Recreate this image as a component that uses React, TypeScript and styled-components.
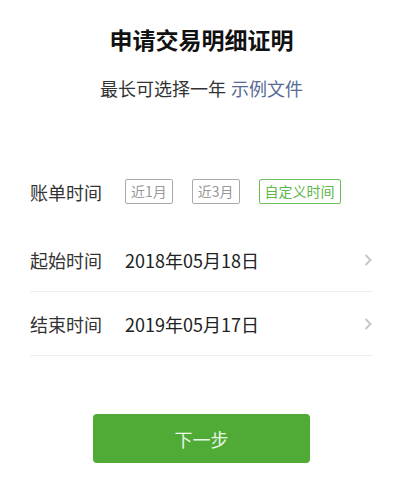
import React, { useState } from 'react';
import styled, { createGlobalStyle } from 'styled-components';

const GlobalStyle = createGlobalStyle`
  body {
    margin: 0;
    background: #fff;
    font-family: "Noto Sans CJK SC", "Liberation Sans", sans-serif;
    -webkit-font-smoothing: antialiased;
  }
`;

const Page = styled.div`
  display: flex;
  flex-direction: column;
  padding: 24px 33px 0 30px;
`;

const Header = styled.header`
  display: flex;
  flex-direction: column;
  align-items: center;
`;

const Title = styled.h1`
  margin: 0;
  font-size: 23px;
  line-height: 30px;
  font-weight: 700;
  color: #111;
`;

const Subtitle = styled.p`
  margin: 22px 0 0;
  font-size: 18px;
  line-height: 24px;
  color: #333;
`;

const Link = styled.a`
  color: #576b95;
  text-decoration: none;
  margin-left: 5px;
`;

const Form = styled.div`
  display: flex;
  flex-direction: column;
  margin-top: 60px;
`;

const Row = styled.div<{ $divider?: boolean; $gapAfter?: number }>`
  display: flex;
  align-items: center;
  height: 63px;
  border-bottom: ${(p) => (p.$divider ? '1px solid #eee' : 'none')};
  padding-bottom: ${(p) => (p.$divider ? 0 : 1)}px;
  margin-bottom: ${(p) => p.$gapAfter ?? 0}px;
`;

const Label = styled.span`
  width: 95px;
  font-size: 18px;
  color: #333;
  flex-shrink: 0;
`;

const Value = styled.span`
  flex: 1;
  font-size: 18px;
  color: #222;
`;

const Tags = styled.div`
  display: flex;
  gap: 19px;
`;

const Tag = styled.button<{ $active?: boolean }>`
  height: 25px;
  padding: 0 5px;
  box-sizing: border-box;
  border: 1px solid ${(p) => (p.$active ? '#6cc05a' : '#aaa')};
  border-radius: 2px;
  background: #fff;
  color: ${(p) => (p.$active ? '#5cb84a' : '#999')};
  font-family: inherit;
  font-size: 14px;
  line-height: 23px;
  cursor: pointer;
`;

const Chevron = styled.svg`
  width: 8px;
  height: 12px;
  margin-right: 1px;
`;

const Button = styled.button`
  align-self: center;
  margin: 58px 0 0;
  width: 217px;
  height: 49px;
  border: none;
  border-radius: 4px;
  background: #50aa36;
  color: #eaf6e6;
  font-family: inherit;
  font-size: 18px;
  cursor: pointer;
`;

const ranges = ['近1月', '近3月', '自定义时间'];

const Arrow = () => (
  <Chevron viewBox="0 0 8 12">
    <polyline points="1.5,1 6.5,6 1.5,11" fill="none" stroke="#c8c8cc" strokeWidth="2" />
  </Chevron>
);

export default function App() {
  const [range, setRange] = useState(2);

  return (
    <Page>
      <GlobalStyle />
      <Header>
        <Title>申请交易明细证明</Title>
        <Subtitle>
          最长可选择一年<Link href="#">示例文件</Link>
        </Subtitle>
      </Header>
      <Form>
        <Row $gapAfter={4}>
          <Label>账单时间</Label>
          <Tags>
            {ranges.map((r, i) => (
              <Tag key={r} $active={range === i} onClick={() => setRange(i)}>
                {r}
              </Tag>
            ))}
          </Tags>
        </Row>
        <Row $divider>
          <Label>起始时间</Label>
          <Value>2018年05月18日</Value>
          <Arrow />
        </Row>
        <Row $divider>
          <Label>结束时间</Label>
          <Value>2019年05月17日</Value>
          <Arrow />
        </Row>
      </Form>
      <Button>下一步</Button>
    </Page>
  );
}
